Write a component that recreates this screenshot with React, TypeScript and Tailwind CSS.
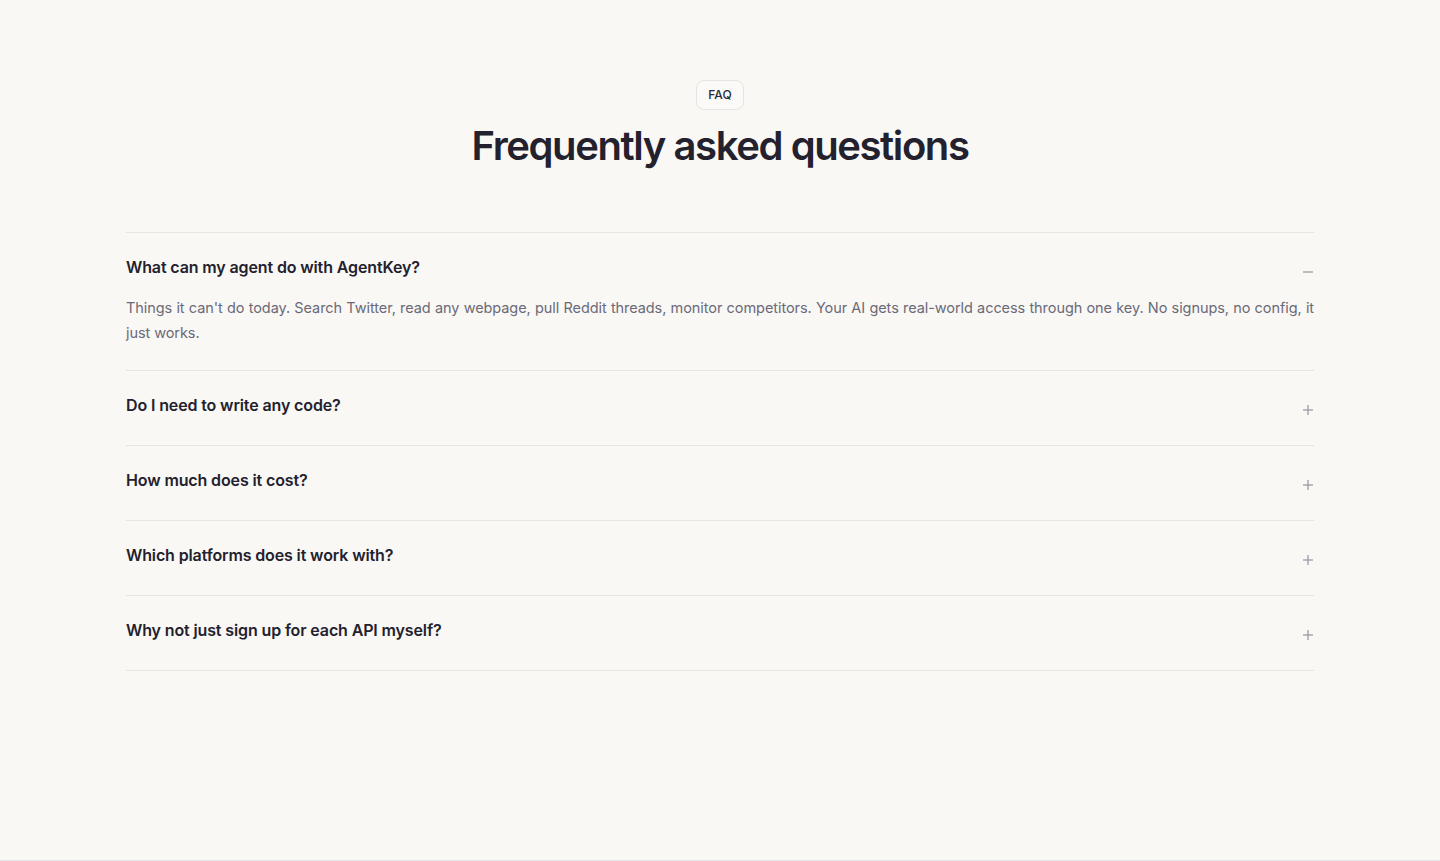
import { useState } from 'react'

const FAQS = [
  {
    q: 'What can my agent do with AgentKey?',
    a: "Things it can't do today. Search Twitter, read any webpage, pull Reddit threads, monitor competitors. Your AI gets real-world access through one key. No signups, no config, it just works.",
  },
  { q: 'Do I need to write any code?', a: 'No. Paste your key into your agent and it picks up every tool automatically.' },
  { q: 'How much does it cost?', a: 'You pay per call, with a free tier to get started.' },
  { q: 'Which platforms does it work with?', a: 'Any agent that speaks MCP or plain HTTP.' },
  { q: 'Why not just sign up for each API myself?', a: 'You could, but one key is a lot less to manage.' },
]

function ToggleIcon({ open }: { open: boolean }) {
  return (
    <svg width="12" height="12" viewBox="0 0 12 12" className="mt-[12px] shrink-0 text-[#9a9aa6]">
      <path d="M1 6h10" stroke="currentColor" strokeWidth="1.3" />
      {!open && <path d="M6 1v10" stroke="currentColor" strokeWidth="1.3" />}
    </svg>
  )
}

export default function App() {
  const [open, setOpen] = useState(0)

  return (
    <div
      className="min-h-[861px] border-b border-[#e3e2e6] bg-[#f9f8f5] text-[#22212b]"
      style={{ fontFamily: 'Inter, "Noto Sans", sans-serif' }}
    >
      <section className="mx-auto max-w-[1188px] pt-20">
        <div className="flex flex-col items-center">
          <span className="rounded-lg border border-[#e6e5e2] bg-[#fbfaf8] px-[11px] py-[6px] text-xs font-medium leading-4 text-[#2a2933]">
            FAQ
          </span>
          <h2 className="mt-[12px] text-[40px] font-semibold leading-[48px] tracking-[-0.035em] text-[#23212d]">
            Frequently asked questions
          </h2>
        </div>

        <ul className="mt-[62px] border-t border-[#e6e5e2]">
          {FAQS.map((item, i) => (
            <li key={item.q} className="border-b border-[#e6e5e2]">
              <button
                type="button"
                onClick={() => setOpen(open === i ? -1 : i)}
                className="flex w-full items-start justify-between pt-[21px] pb-[27px] text-left"
              >
                <span className="text-[16px] font-semibold leading-[26px] tracking-[-0.008em] text-[#23212d]">
                  {item.q}
                </span>
                <ToggleIcon open={open === i} />
              </button>
              {open === i && (
                <p className="-mt-[12px] pb-[25px] text-justify text-[14.5px] leading-[25px] tracking-[-0.005em] text-[#6b6a78]">
                  {item.a}
                </p>
              )}
            </li>
          ))}
        </ul>
      </section>
    </div>
  )
}
